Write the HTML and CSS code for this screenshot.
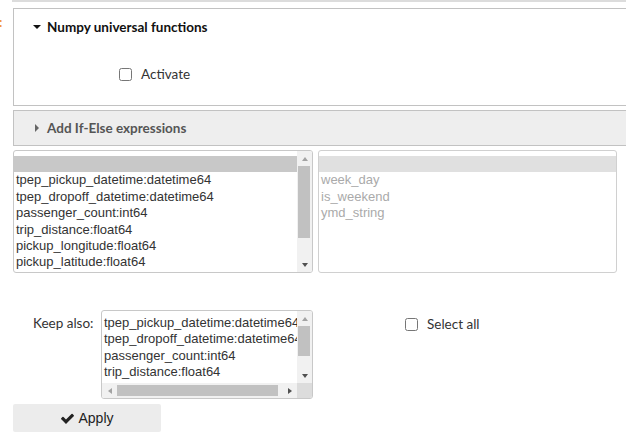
FILE: index.html
```html
<!DOCTYPE html>
<html>
<head>
<meta charset="utf-8">
<link rel="stylesheet" href="styles.css">
</head>
<body>
<div class="page">
  <div class="topline"></div>
  <div class="row1">
    <div class="gutter"><span class="colon">:</span></div>
    <div class="panel">
      <div class="panel-head"><span class="caret-down"></span><span class="head-text">Numpy universal functions</span></div>
      <label class="check-row"><input type="checkbox" class="cb"><span>Activate</span></label>
    </div>
  </div>
  <div class="panel2"><span class="caret-right"></span><span class="head2-text">Add If-Else expressions</span></div>
  <div class="lists">
    <div class="listbox list-left" role="listbox" aria-multiselectable="true">
      <div class="content pad5">
        <div class="opt selected" role="option">&nbsp;</div>
        <div class="opt" role="option">tpep_pickup_datetime:datetime64</div>
        <div class="opt" role="option">tpep_dropoff_datetime:datetime64</div>
        <div class="opt" role="option">passenger_count:int64</div>
        <div class="opt" role="option">trip_distance:float64</div>
        <div class="opt" role="option">pickup_longitude:float64</div>
        <div class="opt" role="option">pickup_latitude:float64</div>
      </div>
      <div class="vbar">
        <span class="btn"><span class="arr up"></span></span>
        <span class="vtrack"><span class="vthumb thumb-left"></span></span>
        <span class="btn"><span class="arr down"></span></span>
      </div>
    </div>
    <div class="listbox list-right" role="listbox" aria-disabled="true">
      <div class="content pad5">
        <div class="opt selected" role="option">&nbsp;</div>
        <div class="opt" role="option">week_day</div>
        <div class="opt" role="option">is_weekend</div>
        <div class="opt" role="option">ymd_string</div>
      </div>
    </div>
  </div>
  <div class="keep-row">
    <span class="keep-label">Keep also:</span>
    <div class="listbox keep-list" role="listbox" aria-multiselectable="true">
      <div class="content pad4">
        <div class="opt" role="option">tpep_pickup_datetime:datetime64</div>
        <div class="opt" role="option">tpep_dropoff_datetime:datetime64</div>
        <div class="opt" role="option">passenger_count:int64</div>
        <div class="opt" role="option">trip_distance:float64</div>
      </div>
      <div class="vbar">
        <span class="btn"><span class="arr up"></span></span>
        <span class="vtrack"><span class="vthumb thumb-keep"></span></span>
        <span class="btn"><span class="arr down"></span></span>
      </div>
      <div class="hbar">
        <span class="btn"><span class="arr left"></span></span>
        <span class="htrack"><span class="hthumb"></span></span>
        <span class="btn"><span class="arr right"></span></span>
      </div>
      <div class="corner"></div>
    </div>
    <label class="select-all"><input type="checkbox" class="cb"><span>Select all</span></label>
  </div>
  <button class="apply"><svg class="check" viewBox="0 0 1792 1792" width="15" height="15"><path fill="#222" d="M1671 566q0 40-28 68l-724 724-136 136q-28 28-68 28t-68-28l-136-136-362-362q-28-28-28-68t28-68l136-136q28-28 68-28t68 28l294 295 656-657q28-28 68-28t68 28l136 136q28 28 28 68z"/></svg><span>Apply</span></button>
</div>
</body>
</html>
```

FILE: styles.css
```css
html, body {
  margin: 0;
  padding: 0;
  overflow: hidden;
  background: #fff;
}
body {
  width: 626px;
  height: 441px;
  font-family: Lato, "Noto Sans", sans-serif;
  color: #333;
}
.page {
  width: 700px;
}
.topline {
  margin-left: 12px;
  height: 2px;
  background: #dcdcdc;
}
.row1 {
  display: flex;
  margin-top: 6px;
}
.gutter {
  width: 13px;
  flex: none;
  overflow: hidden;
}
.colon {
  display: block;
  margin-left: -1px;
  margin-top: 7px;
  color: #f0953a;
  font-weight: bold;
  font-size: 13px;
  line-height: 14px;
}
.panel {
  width: 640px;
  height: 96px;
  border: 1px solid #c2c2c2;
}
.panel-head {
  display: flex;
  align-items: center;
  height: 17px;
  margin-top: 9px;
  padding-left: 19px;
}
.caret-down {
  width: 0;
  height: 0;
  border-left: 4px solid transparent;
  border-right: 4px solid transparent;
  border-top: 4px solid #111;
  margin-right: 6px;
}
.head-text {
  font-weight: bold;
  font-size: 13.5px;
  color: #111;
}
.check-row {
  display: flex;
  align-items: center;
  margin-top: 31px;
  margin-left: 105px;
  font-size: 13.5px;
  color: #333;
}
.cb {
  width: 13px;
  height: 13px;
  margin: 0 9px 0 0;
}
.panel2 {
  margin-left: 13px;
  margin-top: 4px;
  height: 34px;
  background: #eeeeee;
  border: 1px solid #c2c2c2;
  border-right: none;
  display: flex;
  align-items: center;
  padding-left: 21px;
}
.caret-right {
  width: 0;
  height: 0;
  border-top: 4px solid transparent;
  border-bottom: 4px solid transparent;
  border-left: 4px solid #666;
  margin-right: 8px;
}
.head2-text {
  font-weight: bold;
  font-size: 13.5px;
  color: #555;
}
.lists {
  display: flex;
  gap: 5px;
  margin-left: 13px;
  margin-top: 4px;
}
.listbox {
  box-sizing: border-box;
  font-family: "Liberation Sans", Arial, sans-serif;
  font-size: 13px;
  color: #333;
  border: 1px solid #c8c8c8;
  border-radius: 3px;
  background: #fff;
  overflow: hidden;
  display: grid;
  grid-template-columns: minmax(0, 1fr) 15px;
}
.content {
  overflow: hidden;
  min-width: 0;
}
.pad5 {
  padding-top: 5px;
}
.pad4 {
  padding-top: 4px;
}
.opt {
  box-sizing: border-box;
  height: 16.4px;
  line-height: 15.4px;
  padding: 0 2px 1px;
  white-space: nowrap;
}
.list-left {
  width: 300px;
  height: 123px;
}
.list-left .selected {
  background: #c8c8c8;
}
.list-right {
  width: 299px;
  height: 123px;
  color: #aaa;
  border-color: #d0d0d0;
  grid-template-columns: 1fr;
}
.list-right .selected {
  background: #e0e0e0;
}

/* drawn scrollbars */
.vbar {
  display: flex;
  flex-direction: column;
  background: #f1f1f1;
}
.hbar {
  display: flex;
  background: #f1f1f1;
}
.btn {
  flex: none;
  width: 15px;
  height: 15px;
  display: flex;
  align-items: center;
  justify-content: center;
}
.vtrack {
  flex: 1;
  padding: 0 2px 0 1px;
}
.htrack {
  flex: 1;
  padding: 2px 0 2px 0;
}
.vthumb {
  display: block;
  background: #c1c1c1;
}
.thumb-left {
  height: 72px;
}
.thumb-keep {
  height: 30px;
}
.hthumb {
  display: block;
  height: 100%;
  width: 161px;
  background: #c1c1c1;
}
.corner {
  background: #dcdcdc;
}
.arr {
  width: 0;
  height: 0;
}
.arr.up {
  border-left: 3.5px solid transparent;
  border-right: 3.5px solid transparent;
  border-bottom: 4px solid #a3a3a3;
}
.arr.down {
  border-left: 3.5px solid transparent;
  border-right: 3.5px solid transparent;
  border-top: 4px solid #505050;
}
.arr.left {
  border-top: 3.5px solid transparent;
  border-bottom: 3.5px solid transparent;
  border-right: 4px solid #a3a3a3;
}
.arr.right {
  border-top: 3.5px solid transparent;
  border-bottom: 3.5px solid transparent;
  border-left: 4px solid #505050;
}

.keep-row {
  display: flex;
  align-items: flex-start;
  margin-top: 37px;
}
.keep-label {
  margin-left: 33px;
  margin-top: 5px;
  width: 68px;
  font-size: 13.5px;
  color: #333;
}
.keep-list {
  width: 212px;
  height: 89px;
  grid-template-rows: minmax(0, 1fr) 15px;
}
.select-all {
  display: flex;
  align-items: center;
  margin-left: 92px;
  margin-top: 6px;
  font-size: 13.5px;
  color: #333;
}
.apply {
  display: flex;
  align-items: center;
  justify-content: center;
  gap: 3px;
  margin-left: 13px;
  margin-top: 5px;
  width: 148px;
  height: 28px;
  background: #ececec;
  border: none;
  border-radius: 2px;
  font-family: "Liberation Sans", Arial, sans-serif;
  font-size: 14px;
  color: #222;
  padding: 0;
}
.check {
  display: block;
}
```
